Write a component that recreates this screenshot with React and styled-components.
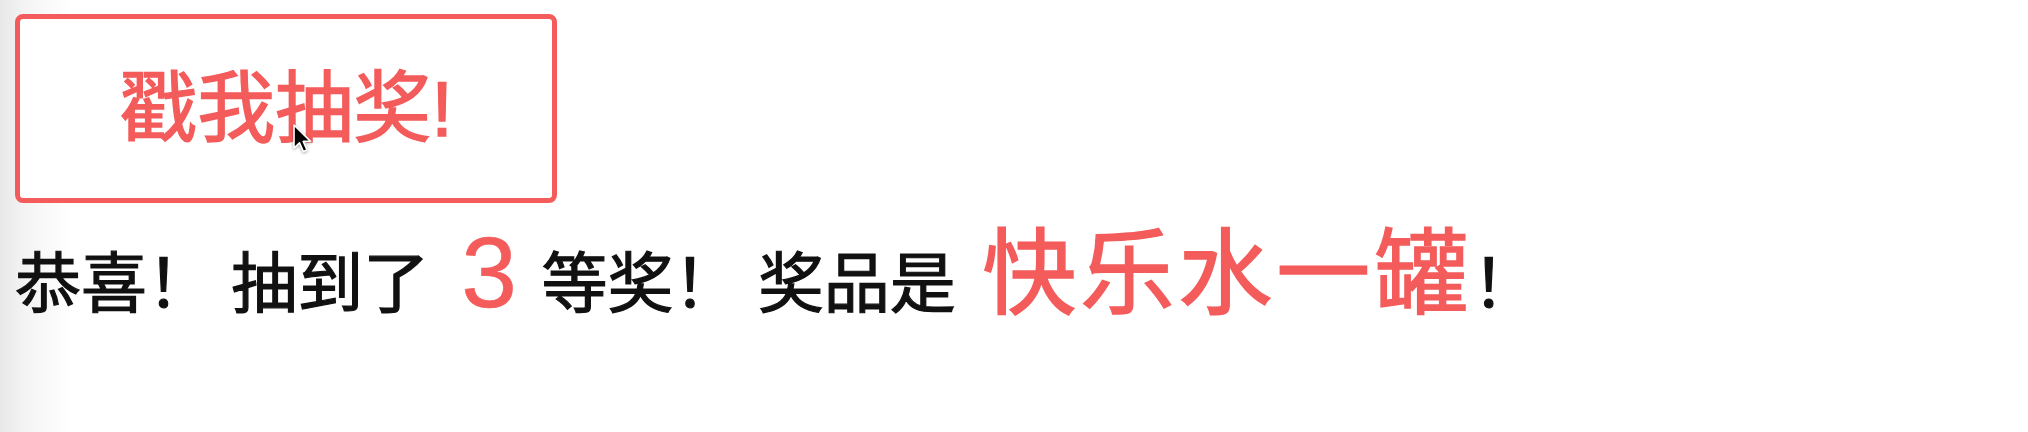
import React from "react";
import styled, { createGlobalStyle } from "styled-components";

const RED = "#f45b5b";

const GlobalStyle = createGlobalStyle`
  html, body {
    margin: 0;
  }
  body {
    min-height: 432px;
    background: linear-gradient(to right, #e8e8e8 0px, #f4f4f4 25px, #ffffff 70px);
    font-family: "Liberation Sans", "Noto Sans CJK SC", sans-serif;
  }
`;

const Page = styled.div`
  display: flex;
  flex-direction: column;
  align-items: flex-start;
  padding: 14px 0 0 15px;
`;

const DrawButton = styled.button`
  position: relative;
  display: flex;
  align-items: center;
  justify-content: center;
  box-sizing: border-box;
  width: 542px;
  height: 189px;
  padding: 0;
  border: 5px solid ${RED};
  border-radius: 8px;
  background: #ffffff;
  color: ${RED};
  font-family: inherit;
  font-size: 78px;
  line-height: 1;
  -webkit-text-stroke: 1.4px ${RED};
  cursor: pointer;
`;

const Pointer = styled.svg`
  position: absolute;
  left: 272px;
  top: 104px;
  width: 22px;
  height: 32px;
  filter: drop-shadow(0 1px 1.5px rgba(0, 0, 0, 0.35));
`;

const Result = styled.p`
  margin: 19px 0 0;
  font-size: 66px;
  line-height: 1;
  color: #111111;
  -webkit-text-stroke: 1.2px #111111;
  white-space: nowrap;
`;

const Prize = styled.span`
  margin-left: 8px;
  font-size: 94px;
  letter-spacing: 4px;
  color: ${RED};
  -webkit-text-stroke: 1.5px ${RED};
`;

const Level = styled.span`
  font-size: 100px;
  color: ${RED};
  -webkit-text-stroke: 0.6px ${RED};
  margin: 0 -3px 0 4px;
`;

const Cursor = () => (
  <Pointer viewBox="0 0 22 32">
    <path
      d="M2 2 L2 25 L7.5 19.8 L11.4 28.6 L15 27 L11.2 18.4 L18.6 18.4 Z"
      fill="#000"
      stroke="#fff"
      strokeWidth="1.6"
      strokeLinejoin="round"
    />
  </Pointer>
);

const App = () => {
  const level = 3;
  const gift = "快乐水一罐";

  return (
    <>
      <GlobalStyle />
      <Page>
        <DrawButton>
          戳我抽奖!
          <Cursor />
        </DrawButton>
        <Result>
          恭喜！{" "}抽到了<Level>{` ${level} `}</Level>等奖！{" "}奖品是{" "}
          <Prize>{gift}</Prize>！
        </Result>
      </Page>
    </>
  );
};

export default App;
